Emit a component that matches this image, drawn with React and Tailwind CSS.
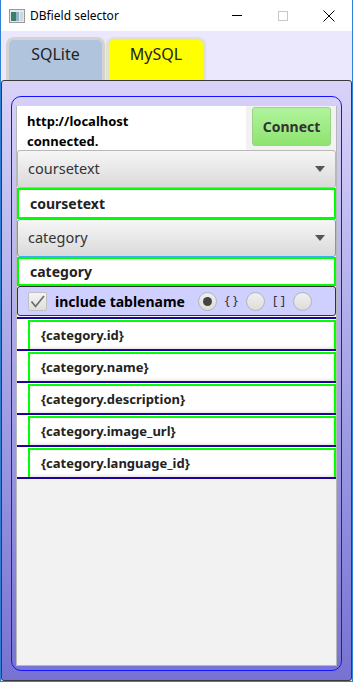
import { useState } from 'react';

const fields = ['id', 'name', 'description', 'image_url', 'language_id'];

const ComboBox = ({ value, focused }) => (
  <div
    className={`h-[38px] flex items-center justify-between pl-[10px] pr-[10px] rounded-[3px] border bg-gradient-to-b from-[#f6f6f6] to-[#dadada] ${
      focused ? 'border-[#3daee9]' : 'border-[#b8b8b8]'
    }`}
  >
    <span className="text-[14.5px] text-[#333]">{value}</span>
    <svg width="10" height="6" viewBox="0 0 10 6">
      <path d="M0 0 L10 0 L5 6 Z" fill="#555" />
    </svg>
  </div>
);

const Radio = ({ checked }) => (
  <div className="w-[19px] h-[19px] rounded-full border border-[#b5b5b5] bg-gradient-to-b from-[#f0f0f0] to-[#dcdcdc] flex items-center justify-center">
    {checked && <div className="w-[9px] h-[9px] rounded-full bg-[#444]" />}
  </div>
);

const App = () => {
  const [tab] = useState('MySQL');

  return (
    <div
      className="w-[353px] h-[682px] flex flex-col bg-[#ebe7fc] border-x border-b border-[#2f7fd3] overflow-hidden"
      style={{ fontFamily: '"Noto Sans", "Open Sans", sans-serif' }}
    >
      {/* Title bar */}
      <div className="h-[31px] bg-white flex items-center shrink-0">
        <svg width="16" height="14" viewBox="0 0 16 14" className="ml-[8px] mr-[5px]">
          <rect x="0.5" y="0.5" width="15" height="13" fill="#e8e8e8" stroke="#9a9a9a" />
          <rect x="2" y="3" width="5" height="9" fill="#3b7f6a" />
          <rect x="7" y="3" width="3" height="9" fill="#8fb4c8" />
          <rect x="11" y="3" width="3" height="9" fill="#cfd8dc" />
        </svg>
        <span className="text-[12px] text-black">DBfield selector</span>
        <div className="ml-auto flex items-center h-full">
          <div className="w-[46px] h-full flex items-center justify-center">
            <div className="w-[10px] h-px bg-black" />
          </div>
          <div className="w-[46px] h-full flex items-center justify-center">
            <div className="w-[10px] h-[10px] border border-[#c8c8c8]" />
          </div>
          <div className="w-[46px] h-full flex items-center justify-center">
            <svg width="12" height="12" viewBox="0 0 12 12">
              <path d="M0.5 0.5 L11.5 11.5 M11.5 0.5 L0.5 11.5" stroke="#000" strokeWidth="1" />
            </svg>
          </div>
        </div>
      </div>

      {/* Tabs */}
      <div className="flex pl-[5px] pt-[6px] gap-px shrink-0">
        <div className="w-[99px] h-[43px] rounded-t-[8px] border-[3px] border-b-0 border-[#d3d3d3] bg-[#b0c4de] flex justify-center pt-[2px]">
          <span className="text-[16px] text-[#222]">SQLite</span>
        </div>
        <div
          className={`w-[100px] h-[43px] rounded-t-[8px] border-[3px] border-b-0 border-[#e2e2c8] flex justify-center pt-[2px] ${
            tab === 'MySQL' ? 'bg-[#ffff00]' : 'bg-[#b0c4de]'
          }`}
        >
          <span className="text-[16px] text-[#222]">MySQL</span>
        </div>
      </div>

      {/* Tab pane */}
      <div className="flex-1 flex flex-col border border-[#3a3a3a] rounded-[3px] bg-gradient-to-b from-[#d9d3f8] to-[#7772d2] pt-[15px] px-[9px] pb-[9px]">
        <div className="flex-1 flex flex-col border border-[#1414ff] rounded-[10px] pt-[9px] px-[4px] pb-[4px]">
          <div className="flex-1 flex flex-col bg-[#f2f2f2] border-x border-b border-[#b8b8b8]">
            {/* Host row */}
            <div className="flex h-[44px]">
              <div className="w-[229px] bg-white pl-[10px] pt-[5px] text-[13px] font-bold leading-[20px] text-black">
                <div>http://localhost</div>
                <div>connected.</div>
              </div>
              <div className="ml-[6px] mt-px w-[79px] h-[39px] rounded-[3px] border border-[#9ccf8a] bg-gradient-to-b from-[#b0f49c] to-[#8ee46f] flex items-center justify-center">
                <span className="text-[14px] font-bold text-[#333]">Connect</span>
              </div>
            </div>

            <ComboBox value="coursetext" />
            <div className="h-[31px] bg-white border-2 border-[#00ff00] flex items-center pl-[11px]">
              <span className="text-[14px] font-bold text-[#222]">coursetext</span>
            </div>

            <ComboBox value="category" focused />
            <div className="h-[29px] bg-white border-2 border-[#00ff00] flex items-center pl-[11px]">
              <span className="text-[14px] font-bold text-[#222]">category</span>
            </div>

            {/* Options row */}
            <div className="h-[30px] bg-[#cfd0ff] border border-[#333] rounded-[3px] flex items-center pl-[10px]">
              <div className="w-[19px] h-[19px] rounded-[2px] border border-[#c0c0c0] bg-gradient-to-b from-[#f4f4f4] to-[#dedede] flex items-center justify-center">
                <svg width="15" height="13" viewBox="0 0 15 13">
                  <path d="M1.5 6.5 L5.5 11.5 L14 1" fill="none" stroke="#6a6a6a" strokeWidth="1.7" />
                </svg>
              </div>
              <span className="ml-[8px] text-[14px] font-bold text-black">include tablename</span>
              <div className="ml-auto mr-[23px] flex items-center">
                <Radio checked />
                <span className="mx-[8px] text-[13px] text-[#333]">{'{ }'}</span>
                <Radio />
                <span className="mx-[8px] text-[13px] text-[#333]">[ ]</span>
                <Radio />
              </div>
            </div>

            {/* Field list */}
            <div className="mt-px border-t-2 border-[#22009c]">
              {fields.map((f) => (
                <div key={f} className="h-[32px] bg-white pl-[11px] flex flex-col border-b-2 border-[#22009c]">
                  <div className="mt-px flex-1 border-2 border-b-0 border-[#00ff00] flex items-center pl-[11px] shadow-[inset_-1px_-2px_2px_rgba(0,0,0,0.08)]">
                    <span className="text-[13px] font-bold text-[#222]">{`{category.${f}}`}</span>
                  </div>
                </div>
              ))}
            </div>
          </div>
        </div>
      </div>
    </div>
  );
};

export default App;
